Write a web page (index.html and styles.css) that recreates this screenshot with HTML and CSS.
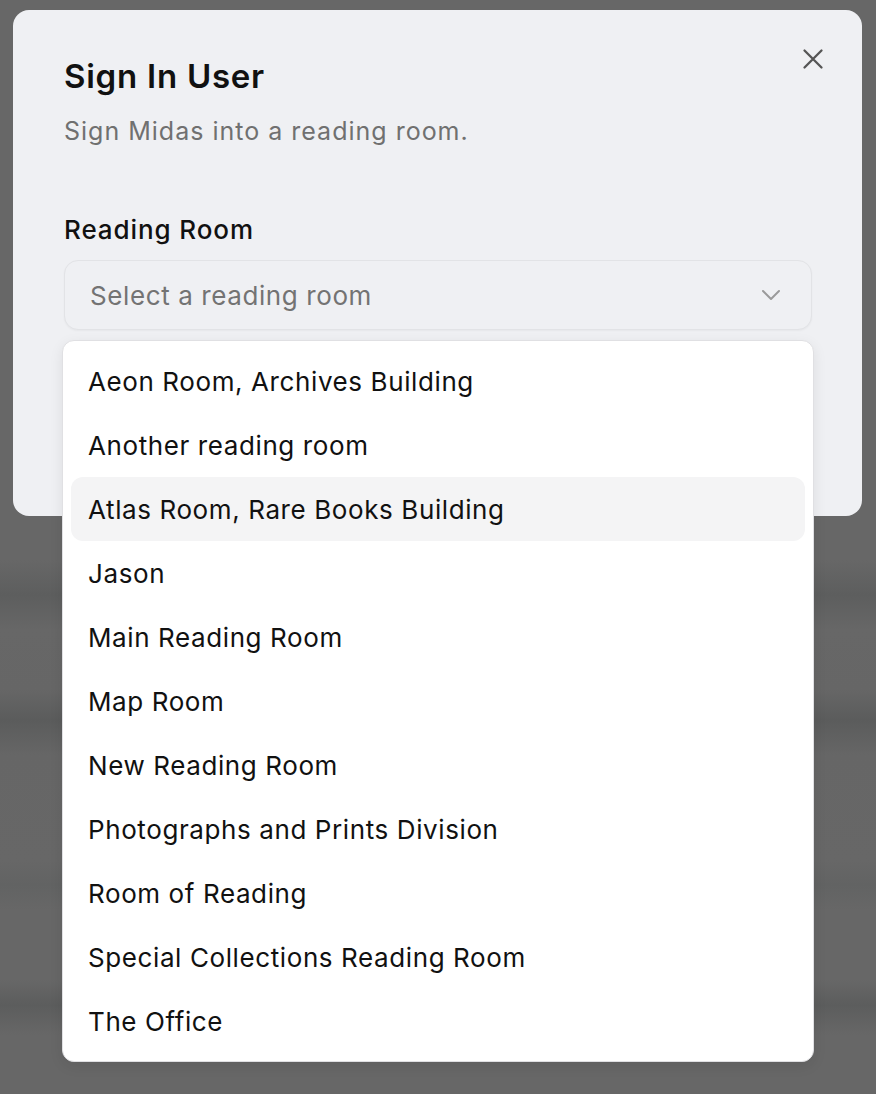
FILE: index.html
```html
<!DOCTYPE html>
<html lang="en">
<head>
<meta charset="utf-8">
<title>Sign In User</title>
<link rel="stylesheet" href="styles.css">
</head>
<body>
<div class="backdrop">
  <div class="dialog">
    <button class="close" aria-label="Close">
      <svg width="22" height="22" viewBox="0 0 22 22" fill="none" stroke="#555" stroke-width="2.3" stroke-linecap="round"><path d="M2.5 2.5 L19.5 19.5 M19.5 2.5 L2.5 19.5"/></svg>
    </button>
    <h1 class="title">Sign In User</h1>
    <p class="subtitle">Sign Midas into a reading room.</p>
    <div class="field">
      <label class="label">Reading Room</label>
      <div class="select-wrap">
        <div class="select">
          <span class="placeholder">Select a reading room</span>
          <svg class="chev" width="20" height="12" viewBox="0 0 20 12" fill="none" stroke="#9a9a9a" stroke-width="2" stroke-linecap="round" stroke-linejoin="round"><path d="M2 2 L10 10 L18 2"/></svg>
        </div>
        <ul class="menu">
          <li class="item">Aeon Room, Archives Building</li>
          <li class="item">Another reading room</li>
          <li class="item active">Atlas Room, Rare Books Building</li>
          <li class="item">Jason</li>
          <li class="item">Main Reading Room</li>
          <li class="item">Map Room</li>
          <li class="item">New Reading Room</li>
          <li class="item">Photographs and Prints Division</li>
          <li class="item">Room of Reading</li>
          <li class="item">Special Collections Reading Room</li>
          <li class="item">The Office</li>
        </ul>
      </div>
    </div>
  </div>
</div>
</body>
</html>
```
FILE: styles.css
```css
html, body {
  margin: 0;
  padding: 0;
  height: 100%;
}
body {
  font-family: Inter, "Noto Sans", "Liberation Sans", sans-serif;
  background: #676767;
}
.backdrop {
  min-height: 1094px;
  padding: 10px 14px 0 13px;
  box-sizing: border-box;
  background:
    linear-gradient(180deg,
      #676767 0px, #676767 560px,
      #5d5e5e 595px, #676767 630px,
      #666 690px, #5b5c5c 720px, #666 755px,
      #676767 860px, #626363 885px, #676767 910px,
      #676767 980px, #5c5d5d 1005px, #676767 1035px, #676767 100%);
}
.dialog {
  position: relative;
  width: 849px;
  height: 506px;
  box-sizing: border-box;
  background: #eff0f3;
  border-radius: 16px;
  padding: 42px 50px 0 51px;
}
.close {
  position: absolute;
  top: 38px;
  right: 38px;
  width: 22px;
  height: 22px;
  padding: 0;
  border: none;
  background: none;
  display: flex;
}
.title {
  margin: 0;
  font-size: 33px;
  line-height: 48px;
  font-weight: 600;
  color: #111;
  letter-spacing: 0.75px;
}
.subtitle {
  margin: 15px 0 0;
  font-size: 25px;
  line-height: 32px;
  color: #707070;
  font-weight: 400;
  letter-spacing: 1px;
}
.field {
  margin-top: 67px;
}
.label {
  display: block;
  font-size: 26px;
  line-height: 32px;
  font-weight: 500;
  color: #111;
  letter-spacing: 0.9px;
}
.select-wrap {
  position: relative;
  margin-top: 14px;
}
.select {
  height: 70px;
  box-sizing: border-box;
  border: 1.5px solid #e2e3e6;
  border-radius: 14px;
  background: #eff0f3;
  display: flex;
  align-items: center;
  justify-content: space-between;
  padding: 0 30px 0 25px;
  box-shadow: 0 1px 2px rgba(0,0,0,0.04);
}
.placeholder {
  font-size: 26px;
  color: #737373;
  letter-spacing: 0.6px;
}
.chev {
  width: 20px;
  height: 12px;
}
.menu {
  position: absolute;
  top: 80px;
  left: -2px;
  right: -2px;
  margin: 0;
  padding: 8px 8px;
  list-style: none;
  background: #fff;
  border: 1.5px solid #e0e0e3;
  border-radius: 12px;
  box-shadow: 0 4px 14px rgba(0,0,0,0.08);
}
.item {
  height: 64px;
  display: flex;
  align-items: center;
  padding: 0 17px;
  font-size: 26px;
  color: #111;
  border-radius: 12px;
  letter-spacing: 0.6px;
}
.item.active {
  background: #f4f4f5;
}
```
